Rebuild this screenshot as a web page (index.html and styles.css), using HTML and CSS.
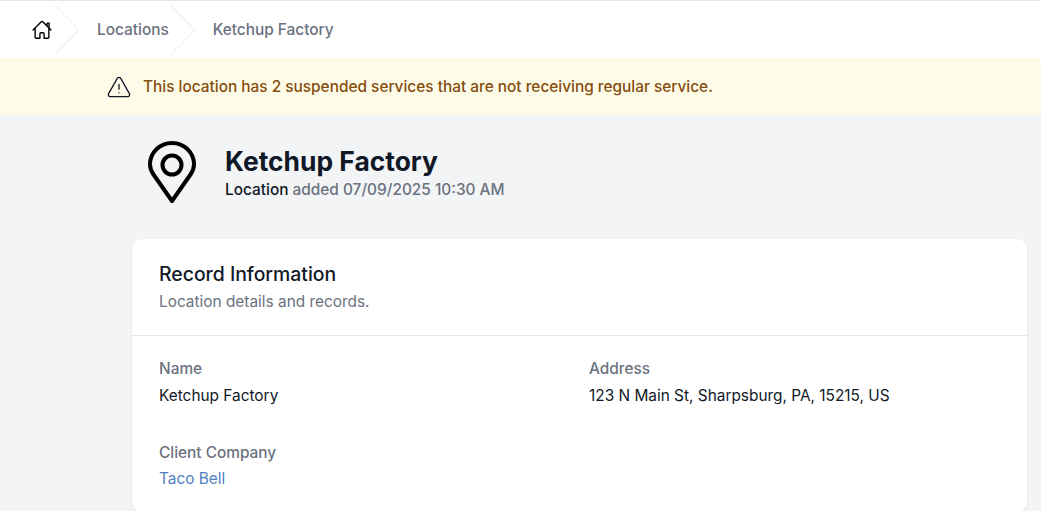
FILE: index.html
```html
<!DOCTYPE html>
<html lang="en">
<head>
  <meta charset="UTF-8" />
  <meta name="viewport" content="width=device-width, initial-scale=1.0" />
  <title>Ketchup Factory</title>
  <link rel="stylesheet" href="styles.css">
</head>
<body>
  <nav class="breadcrumb">
    <a class="crumb-home" href="#">
      <svg class="home-icon" viewBox="0 0 24 24" fill="none" stroke="currentColor" stroke-width="1.5" stroke-linecap="round" stroke-linejoin="round">
        <path d="M2.25 12 11.2 3.05a1.13 1.13 0 0 1 1.6 0L21.75 12M4.5 9.75V19.9c0 .6.5 1.1 1.1 1.1h4.15v-4.9c0-.6.5-1.1 1.1-1.1h2.3c.6 0 1.1.5 1.1 1.1V21h4.15c.6 0 1.1-.5 1.1-1.1V9.75M17.500 7.750V4.500h2.250v5.250"/>
      </svg>
    </a>
    <svg class="crumb-sep" viewBox="0 0 26 50" fill="none" stroke="#e5e7eb" stroke-width="1"><path d="M0.5 0 25 25 0.5 50"/></svg>
    <a class="crumb" href="#">Locations</a>
    <svg class="crumb-sep" viewBox="0 0 26 50" fill="none" stroke="#e5e7eb" stroke-width="1"><path d="M0.5 0 25 25 0.5 50"/></svg>
    <a class="crumb" href="#">Ketchup Factory</a>
  </nav>

  <div class="alert">
    <svg class="alert-icon" viewBox="0 0 24 24" fill="none" stroke="currentColor" stroke-width="1.3" stroke-linecap="round" stroke-linejoin="round">
      <path d="M12 9.500v4.700M12 17.600v.1M10.300 3.400 1.600 18.600c-.8 1.400.2 3 1.700 3h17.400c1.500 0 2.500-1.600 1.700-3L13.700 3.400c-.8-1.300-2.600-1.300-3.400 0Z"/>
    </svg>
    <span>This location has 2 suspended services that are not receiving regular service.</span>
  </div>

  <main class="content">
    <header class="page-head">
      <svg class="pin-icon" viewBox="0 0 48 62" fill="none" stroke="currentColor" stroke-width="4" stroke-linecap="round" stroke-linejoin="round">
        <path d="M24 60 5.500 33.500C3.200 30.200 2 27 2 23.500 2 11.500 11.800 2 24 2s22 9.500 22 21.500c0 3.500-1.200 6.700-3.500 10L24 60Z"/>
        <circle cx="24" cy="24" r="9.500"/>
      </svg>
      <div>
        <h1>Ketchup Factory</h1>
        <p class="subtitle"><strong>Location</strong> added 07/09/2025 10:30 AM</p>
      </div>
    </header>

    <section class="card">
      <div class="card-head">
        <h2>Record Information</h2>
        <p>Location details and records.</p>
      </div>
      <dl class="fields">
        <div class="field">
          <dt>Name</dt>
          <dd>Ketchup Factory</dd>
        </div>
        <div class="field">
          <dt>Address</dt>
          <dd>123 N Main St, Sharpsburg, PA, 15215, US</dd>
        </div>
        <div class="field">
          <dt>Client Company</dt>
          <dd class="link-value"><a href="#">Taco Bell</a></dd>
        </div>
      </dl>
    </section>
  </main>
</body>
</html>
```

FILE: styles.css
```css
html, body {
  margin: 0;
  padding: 0;
  height: 100%;
  overflow: hidden;
  background: #f3f4f6;
  font-family: Inter, "Liberation Sans", sans-serif;
  font-size: 15.4px;
  color: #111827;
}
a {
  text-decoration: none;
}
.breadcrumb {
  display: flex;
  align-items: center;
  height: 57px;
  background: #fff;
  border-top: 1px solid #e5e7eb;
}
.crumb-home {
  display: flex;
  margin-left: 31px;
  margin-right: 1px;
  color: #000;
}
.home-icon {
  width: 22px;
  height: 22px;
}
.crumb-sep {
  flex: none;
  width: 26px;
  height: 50px;
}
.crumb {
  margin: 0 1px 0 17px;
  font-weight: 500;
  color: #6b7280;
}
.alert {
  display: flex;
  align-items: center;
  gap: 12px;
  height: 57px;
  padding-left: 107px;
  background: #fefce8;
  font-weight: 500;
  color: #854d0e;
}
.alert-icon {
  width: 24px;
  height: 24px;
  color: #111827;
}
.content {
  padding: 26px 14px 0 132px;
}
.page-head {
  display: flex;
  align-items: center;
  gap: 29px;
  margin-left: 16px;
  margin-bottom: 36px;
}
.pin-icon {
  width: 48px;
  height: 62px;
  color: #000;
}
.page-head h1 {
  margin: 0;
  font-size: 26.4px;
  line-height: 32px;
  font-weight: 700;
}
.subtitle {
  margin: 2px 0 -2px;
  line-height: 22px;
  font-weight: 500;
  color: #6b7280;
}
.subtitle strong {
  font-weight: 500;
  color: #111827;
}
.card {
  background: #fff;
  border-radius: 10px;
  box-shadow: 0 1px 3px rgba(0, 0, 0, 0.08);
}
.card-head {
  padding: 21px 27px 21px;
  border-bottom: 1px solid #e5e7eb;
}
.card-head h2 {
  margin: 0;
  font-size: 19.4px;
  line-height: 28px;
  font-weight: 500;
}
.card-head p {
  margin: 2px 0 0;
  line-height: 24px;
  color: #6b7280;
}
.fields {
  display: grid;
  grid-template-columns: 1fr 1fr;
  column-gap: 19px;
  row-gap: 35px;
  margin: 0;
  padding: 22px 27px 22px;
}
.field dt {
  line-height: 22px;
  font-weight: 500;
  color: #6b7280;
}
.field dd {
  margin: 5px 0 0;
  line-height: 22px;
  color: #111827;
}
.field .link-value {
  margin-top: 4px;
}
.field dd a {
  color: #4f7fc0;
}
```
